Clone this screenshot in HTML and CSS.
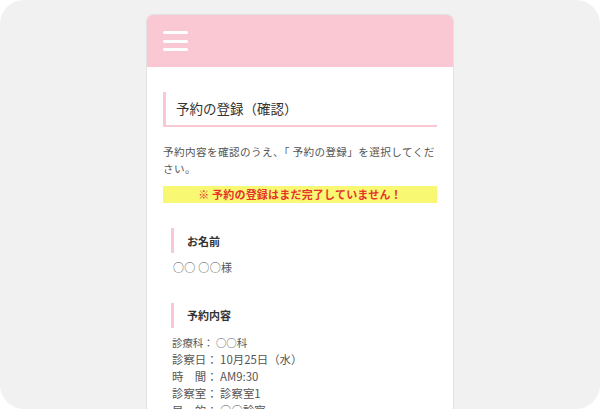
FILE: index.html
```html
<!DOCTYPE html>
<html lang="ja">
<head>
<meta charset="utf-8">
<title>予約の登録（確認）</title>
<link rel="stylesheet" href="styles.css">
</head>
<body>
<div class="screen">
  <div class="phone">
    <header class="topbar">
      <div class="burger" aria-label="メニュー">
        <span></span><span></span><span></span>
      </div>
    </header>
    <main class="content">
      <h1 class="page-title">予約の登録（確認）</h1>
      <p class="lead">予約内容を確認のうえ、「 予約の登録」を選択してください。</p>
      <p class="notice">※ 予約の登録はまだ完了していません！</p>

      <h2 class="sec-title">お名前</h2>
      <p class="sec-body">○○ ○○様</p>

      <h2 class="sec-title sec-title-2">予約内容</h2>
      <ul class="details">
        <li class="small">診療科： ○○科</li>
        <li>診察日： 10月25日（水）</li>
        <li>時　間： AM9:30</li>
        <li>診察室： 診察室1</li>
        <li>目　的： ○○診察</li>
      </ul>
    </main>
  </div>
</div>
</body>
</html>
```

FILE: styles.css
```css
* { box-sizing: border-box; }
html, body { margin: 0; padding: 0; background: #ffffff; }
body {
  font-family: "Noto Sans CJK JP", "Noto Sans", sans-serif;
  color: #555;
}
.screen {
  width: 600px;
  height: 409px;
  background: #f1f1f1;
  border-radius: 24px;
  overflow: hidden;
  display: flex;
  justify-content: center;
  padding-top: 14px;
}
.phone {
  width: 308px;
  height: 420px;
  flex: none;
  background: #fff;
  border: 1px solid #e2e2e2;
  border-bottom: none;
  border-radius: 7px 7px 0 0;
  overflow: hidden;
}
.topbar {
  height: 52px;
  background: #f9c8d3;
  display: flex;
  align-items: center;
  padding-left: 16px;
}
.burger {
  display: flex;
  flex-direction: column;
  gap: 5.5px;
}
.burger span {
  display: block;
  width: 25px;
  height: 3px;
  background: #fff;
  border-radius: 2px;
}
.content {
  padding: 25px 16px 0;
}
.page-title {
  margin: 0;
  height: 35px;
  display: flex;
  align-items: center;
  padding-left: 10px;
  padding-bottom: 1px;
  border-left: 3px solid #f9c8d3;
  border-bottom: 2px solid #f9c8d3;
  font-size: 13.5px;
  font-weight: normal;
  color: #333;
}
.lead {
  margin: 17px 0 0;
  font-size: 10.6px;
  letter-spacing: 0.4px;
  line-height: 16.5px;
  color: #555;
}
.notice {
  margin: 9px 0 0;
  height: 17px;
  line-height: 17px;
  background: #f9f872;
  color: #e5352d;
  font-weight: bold;
  font-size: 11px;
  letter-spacing: 0.2px;
  text-align: center;
}
.sec-title {
  margin: 25px 0 0 8px;
  height: 25px;
  display: flex;
  align-items: center;
  padding-left: 13px;
  border-left: 3px solid #f9c8d3;
  font-size: 11px;
  font-weight: bold;
  color: #333;
}
.sec-title-2 { margin-top: 27px; }
.sec-body {
  margin: 6px 0 0 10px;
  font-size: 11px;
  letter-spacing: 0.3px;
  line-height: 16.5px;
  color: #555;
}
.details {
  list-style: none;
  margin: 7px 0 0 9px;
  padding: 0;
  font-size: 11.4px;
  line-height: 16.8px;
  color: #555;
}
.details .small { font-size: 10.4px; }
```
